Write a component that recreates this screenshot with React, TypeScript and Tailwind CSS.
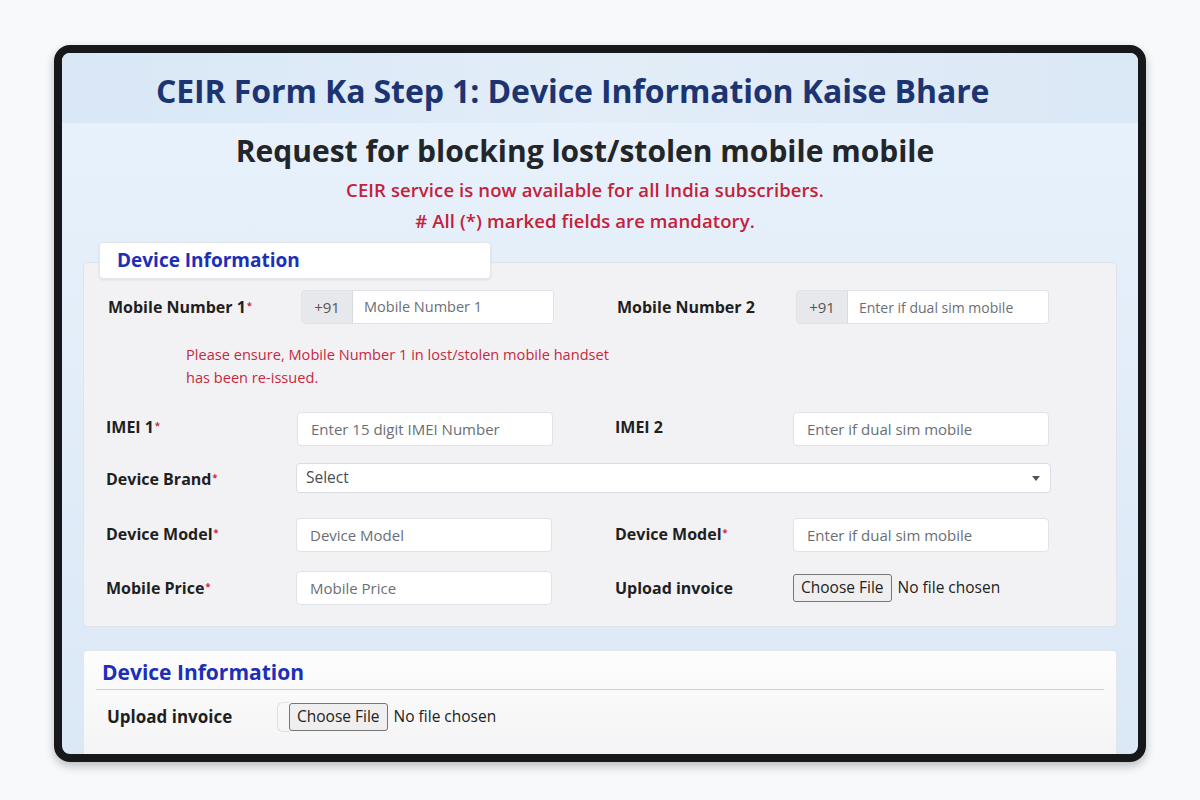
const font = { fontFamily: '"Open Sans", "Noto Sans", sans-serif' };

const Req = () => <sup className="text-[#d0213a] text-[9px] ml-[1px] relative -top-[4px] font-bold">*</sup>;

const Label = ({ text, req }: { text: string; req?: boolean }) => (
  <div className="text-[16px] font-bold text-[#1f1f1f] whitespace-nowrap">
    {text}
    {req && <Req />}
  </div>
);

const TextInput = ({ placeholder }: { placeholder: string }) => (
  <div className="h-[34px] w-[256px] rounded-[4px] border border-[#dfe2e6] bg-white px-[13px] flex items-center text-[15px] text-[#6b6f75]">
    {placeholder}
  </div>
);

const PhoneInput = ({ placeholder, small }: { placeholder: string; small?: boolean }) => (
  <div className="h-[34px] w-[253px] ml-[4px] flex rounded-[4px] border border-[#dfe2e6] overflow-hidden">
    <div className="w-[51px] bg-[#e6e8ec] border-r border-[#d7dadf] flex items-center justify-center text-[15px] text-[#555]">
      +91
    </div>
    <div className={`flex-1 bg-white px-[11px] flex items-center text-[#6b6f75] ${small ? 'text-[14px]' : 'text-[14.5px]'}`}>{placeholder}</div>
  </div>
);

const FileInput = () => (
  <div className="flex items-center gap-[6px] text-[15.5px] text-[#222]">
    <span className="h-[28px] px-[7px] flex items-center bg-[#efefef] border border-[#767676] rounded-[3px]">Choose File</span>
    <span>No file chosen</span>
  </div>
);

export default function App() {
  return (
    <div className="min-h-[800px] bg-[#f8f9fa] pt-[45px] pl-[54px]" style={font}>
      <div className="w-[1092px] h-[717px] rounded-[16px] border-[8px] border-[#17181a] overflow-hidden bg-gradient-to-b from-[#e9f2fc] to-[#dbe8f6] shadow-[0_4px_10px_rgba(0,0,0,0.25)]">
        {/* title band */}
        <div className="h-[70px] bg-gradient-to-r from-[#d9e7f6] via-[#e2edf8] to-[#dbe8f5] flex items-center pl-[94px] pt-[5px]">
          <h1 className="text-[32px] font-bold text-[#1c3572] tracking-[-0.1px]">
            CEIR Form Ka Step 1: Device Information Kaise Bhare
          </h1>
        </div>

        <div className="text-center pr-[30px] pt-[8px]">
          <h2 className="text-[30px] font-bold text-[#232629] leading-[40px] tracking-[0px]">
            Request for blocking lost/stolen mobile mobile
          </h2>
          <p className="mt-[7px] text-[18.5px] font-semibold text-[#c4213b] leading-[24px] tracking-[0.1px]">
            CEIR service is now available for all India subscribers.
          </p>
          <p className="mt-[7px] text-[18.5px] font-semibold text-[#c4213b] leading-[24px] tracking-[0.1px]">
            # All (*) marked fields are mandatory.
          </p>
        </div>

        {/* first card */}
        <div className="mx-[21px] mt-[9px]">
          <div className="relative z-10 ml-[16px] w-[392px] h-[37px] bg-white rounded-[4px] border border-[#e3e6ea] shadow-[0_1px_3px_rgba(0,0,0,0.08)] flex items-center pl-[17px] -mb-[17px]">
            <span className="text-[19px] font-bold text-[#1c2fb8]">Device Information</span>
          </div>
          <div className="bg-[#f2f2f4] border border-[#e0e3e8] rounded-[4px] pl-[22px] pt-[27px] pb-[21px]">
            {/* row 1 */}
            <div className="flex items-center">
              <div className="w-[191px] pl-[2px]"><Label text="Mobile Number 1" req /></div>
              <PhoneInput placeholder="Mobile Number 1" />
              <div className="w-[63px]" />
              <div className="w-[175px]"><Label text="Mobile Number 2" /></div>
              <PhoneInput placeholder="Enter if dual sim mobile" small />
            </div>
            <p className="ml-[80px] mt-[19px] text-[14.6px] leading-[23px] text-[#c8283f]">
              Please ensure, Mobile Number 1 in lost/stolen mobile handset
              <br />
              has been re-issued.
            </p>
            {/* imei */}
            <div className="flex items-center mt-[23px]">
              <div className="w-[191px] -mt-[4px]"><Label text="IMEI 1" req /></div>
              <TextInput placeholder="Enter 15 digit IMEI Number" />
              <div className="w-[62px]" />
              <div className="w-[178px] -mt-[4px]"><Label text="IMEI 2" /></div>
              <TextInput placeholder="Enter if dual sim mobile" />
            </div>
            {/* brand */}
            <div className="flex items-center mt-[17px]">
              <div className="w-[190px] pt-[2px]"><Label text="Device Brand" req /></div>
              <div className="h-[30px] w-[755px] rounded-[4px] border border-[#d9dce1] bg-white pl-[9px] pr-[10px] flex items-center justify-between text-[15.5px] text-[#4a4d52]">
                <span>Select</span>
                <span className="w-0 h-0 border-l-[4px] border-r-[4px] border-t-[5px] border-l-transparent border-r-transparent border-t-[#555]" />
              </div>
            </div>
            {/* model */}
            <div className="flex items-center mt-[25px]">
              <div className="w-[190px] -mt-[2px]"><Label text="Device Model" req /></div>
              <TextInput placeholder="Device Model" />
              <div className="w-[63px]" />
              <div className="w-[178px] -mt-[2px]"><Label text="Device Model" req /></div>
              <TextInput placeholder="Enter if dual sim mobile" />
            </div>
            {/* price */}
            <div className="flex items-center mt-[19px]">
              <div className="w-[190px]"><Label text="Mobile Price" req /></div>
              <TextInput placeholder="Mobile Price" />
              <div className="w-[63px]" />
              <div className="w-[178px]"><Label text="Upload invoice" /></div>
              <FileInput />
            </div>
          </div>
        </div>

        {/* second card */}
        <div className="mx-[21px] mt-[23px] h-[120px] bg-gradient-to-b from-[#fdfdfd] to-[#f3f3f5] border border-[#e3e6ea] rounded-[4px] pt-[7px] px-[12px]">
          <h3 className="pl-[6px] text-[21px] font-bold text-[#1c2fb8] leading-[28px]">Device Information</h3>
          <div className="mt-[3px] border-t border-[#cfd2d6]" />
          <div className="flex items-center mt-[12px] pl-[11px]">
            <div className="w-[170px] text-[17px] font-bold text-[#1f1f1f]">Upload invoice</div>
            <div className="h-[30px] border-l border-y border-[#dcdfe3] rounded-l-[6px] w-[12px]" />
            <FileInput />
          </div>
        </div>
      </div>
    </div>
  );
}
